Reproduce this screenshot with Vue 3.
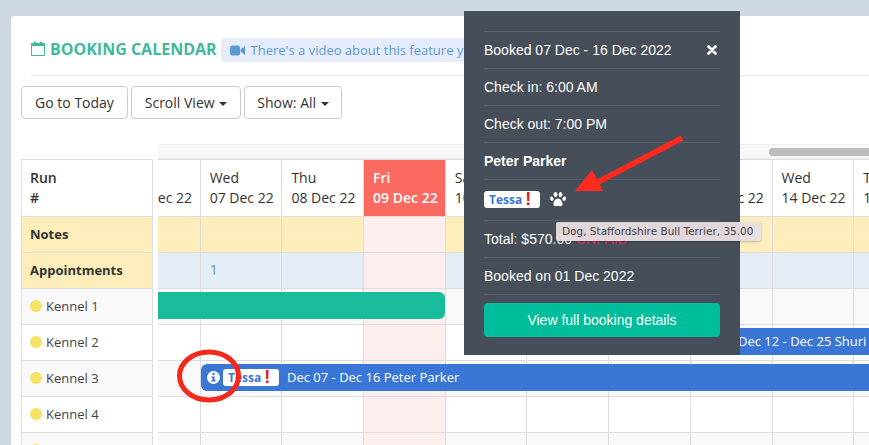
<script setup>
const days = [
  ['Tue', '06 Dec 22'], ['Wed', '07 Dec 22'], ['Thu', '08 Dec 22'], ['Fri', '09 Dec 22'], ['Sat', '10 Dec 22'],
  ['Sun', '11 Dec 22'], ['Mon', '12 Dec 22'], ['Tue', '13 Dec 22'], ['Wed', '14 Dec 22'], ['Thu', '15 Dec 22']
]
const rows = [
  { name: 'Notes', kind: 'notes' },
  { name: 'Appointments', kind: 'appts' },
  { name: 'Kennel 1', kind: 'alt' },
  { name: 'Kennel 2', kind: 'plain' },
  { name: 'Kennel 3', kind: 'alt' },
  { name: 'Kennel 4', kind: 'plain' },
  { name: 'Kennel 5', kind: 'alt' }
]
const isKennel = (r) => r.kind === 'alt' || r.kind === 'plain'
</script>

<template>
  <div class="page">
    <section class="card">
      <header class="head">
        <svg class="cal" viewBox="0 0 14 15" width="14" height="15">
          <path d="M.5 2.5h13v12H.5z" fill="none" stroke="#3fb8a0" />
          <path d="M.5 2.5h13v2.5H.5z" fill="#3fb8a0" />
          <rect x="3" y="0.5" width="2" height="3" rx=".6" fill="#3fb8a0" />
          <rect x="9" y="0.5" width="2" height="3" rx=".6" fill="#3fb8a0" />
        </svg>
        <h1 class="title">BOOKING CALENDAR</h1>
        <div class="pill">
          <svg viewBox="0 0 15 11" width="15" height="11">
            <rect x="0" y="0.5" width="10" height="10" rx="2.2" fill="#5b9bd5" />
            <path d="M10.5 4.6 15 1v9l-4.5-3.6z" fill="#5b9bd5" />
          </svg>
          <span>There's a video about this feature you might like to watch</span>
        </div>
      </header>

      <div class="toolbar">
        <button class="btn w1">Go to Today</button>
        <button class="btn w2">Scroll View <i class="caret"></i></button>
        <button class="btn w3">Show: All <i class="caret"></i></button>
      </div>

      <div class="calendar">
        <div class="fixed">
          <div class="fixed-head">Run<br />#</div>
          <div v-for="r in rows" :key="r.name" class="fixed-cell" :class="r.kind">
            <i v-if="isKennel(r)" class="dot"></i>{{ r.name }}
          </div>
        </div>
        <div class="scroller">
          <div class="strip"><div class="thumb"></div></div>
          <div class="grid">
            <div class="line head-line">
              <div v-for="d in days" :key="d[1]" class="day" :class="{ today: d[1] === '09 Dec 22' }">
                {{ d[0] }}<br />{{ d[1] }}
              </div>
            </div>
            <div v-for="r in rows" :key="r.name" class="line" :class="r.kind">
              <div v-for="d in days" :key="d[1]" class="cell" :class="{ todaycol: d[1] === '09 Dec 22' }">
                <span v-if="r.kind === 'appts' && d[1] === '07 Dec 22'" class="count">1</span>
              </div>
            </div>
            <div class="bar green"></div>
            <div class="bar blue shuri">Dec 12 - Dec 25 Shuri</div>
            <div class="bar blue peter">
              <svg class="info" viewBox="0 0 12 12" width="13" height="13">
                <path fill-rule="evenodd" fill="#fff" d="M6 0a6 6 0 1 1 0 12A6 6 0 0 1 6 0zM5 1.9v1.8h2V1.9zM4.2 5v1.2H5v2.2h-.8v1.3h3.6V8.4H7V5z" />
              </svg>
              <span class="tag">Tessa<b>!</b></span>
              <span class="bar-text">Dec 07 - Dec 16 Peter Parker</span>
            </div>
          </div>
        </div>
      </div>
    </section>

    <aside class="pop">
      <div class="row first">
        <span>Booked 07 Dec - 16 Dec 2022</span>
        <svg class="close" viewBox="0 0 10 10" width="10" height="10">
          <path d="M1.5 1.5l7 7M8.5 1.5l-7 7" stroke="#fff" stroke-width="2.8" stroke-linecap="round" />
        </svg>
      </div>
      <div class="row">Check in: 6:00 AM</div>
      <div class="row">Check out: 7:00 PM</div>
      <div class="row"><strong>Peter Parker</strong></div>
      <div class="row pets">
        <span class="tag big">Tessa<b>!</b></span>
        <svg class="paw" viewBox="0 0 16 15" width="16" height="15">
          <g fill="#fff">
            <ellipse cx="5.5" cy="2.6" rx="1.9" ry="2.5" />
            <ellipse cx="10.5" cy="2.6" rx="1.9" ry="2.5" />
            <ellipse cx="1.8" cy="6.7" rx="1.7" ry="2.2" transform="rotate(-18 1.8 6.7)" />
            <ellipse cx="14.2" cy="6.7" rx="1.7" ry="2.2" transform="rotate(18 14.2 6.7)" />
            <path d="M8 6.4c2.2 0 4.6 3.1 4.6 5.6 0 1.6-1.2 2.2-2.4 2.2-1 0-1.5-.5-2.2-.5s-1.2.5-2.2.5c-1.2 0-2.4-.6-2.4-2.2 0-2.5 2.4-5.6 4.6-5.6z" />
          </g>
        </svg>
      </div>
      <div class="row">Total: $570.00 <span class="unpaid">UNPAID</span></div>
      <div class="row">Booked on 01 Dec 2022</div>
      <div class="row last"><button class="view">View full booking details</button></div>
    </aside>

    <div class="tooltip">Dog, Staffordshire Bull Terrier, 35.00</div>

    <svg class="marks" viewBox="0 0 869 445" width="869" height="445">
      <ellipse cx="209" cy="376" rx="29.5" ry="24" fill="none" stroke="#f5281c" stroke-width="5" />
      <path d="M682 138 598 182" stroke="#fd2a1e" stroke-width="5.5" fill="none" />
      <path d="M575 191 592 170 603 191z" fill="#fd2a1e" />
    </svg>
  </div>
</template>

<style>
html, body { margin: 0; height: 100%; overflow: hidden; background: #cdd8e2; }
</style>

<style scoped>
.page {
  position: relative;
  width: 869px;
  height: 445px;
  overflow: hidden;
  padding: 16px 0 0 11px;
  box-sizing: border-box;
  background: #cdd8e2;
  font-family: "Open Sans", sans-serif;
  font-size: 14px;
  color: #333;
}
.card {
  background: #fff;
  border-radius: 4px 0 0 0;
  height: 429px;
  overflow: hidden;
}
.head {
  margin: 0 0 0 20px;
  padding: 22px 0 13px;
  height: 24px;
  border-bottom: 1px solid #eee;
  display: flex;
  align-items: center;
  white-space: nowrap;
}
.cal { margin-top: -3px; flex: none; }
.title {
  margin: 0 0 0 5px;
  font-size: 16px;
  font-weight: 700;
  line-height: 24px;
  color: #3fb8a0;
  position: relative;
  top: -1px;
}
.pill {
  margin-left: 4px;
  height: 24px;
  padding: 0 10px 0 9px;
  border-radius: 4px;
  background: #e6ecfb;
  color: #5b9bd5;
  display: flex;
  align-items: center;
  gap: 6px;
  line-height: 24px;
  font-size: 13px;
  flex: none;
}
.toolbar {
  display: flex;
  gap: 3px;
  margin: 10px 0 0 10px;
}
.btn {
  height: 33px;
  box-sizing: border-box;
  padding: 0;
  border: 1px solid #ccc;
  border-radius: 4px;
  background: #fff;
  color: #333;
  font: 14px "Open Sans", sans-serif;
  text-align: center;
}
.w1 { width: 107px; }
.w2 { width: 110px; }
.w3 { width: 98px; }
.caret {
  display: inline-block;
  width: 0;
  height: 0;
  margin-left: 1px;
  vertical-align: middle;
  border-top: 4px solid #333;
  border-left: 4px solid transparent;
  border-right: 4px solid transparent;
}
.calendar {
  display: flex;
  margin: 25px 0 0 10px;
  gap: 5px;
}
.fixed {
  width: 130px;
  flex: none;
  margin-top: 15px;
  border-left: 1px solid #ddd;
  border-right: 1px solid #ddd;
  border-top: 1px solid #ddd;
}
.fixed-head {
  height: 57px;
  box-sizing: border-box;
  padding: 8px 8px 0;
  line-height: 20px;
  font-weight: 600;
  border-bottom: 1px solid #ddd;
}
.fixed-cell {
  height: 36px;
  box-sizing: border-box;
  padding: 0 8px 2px;
  display: flex;
  align-items: center;
  border-bottom: 1px solid #ddd;
  color: #444;
  font-size: 13px;
}
.fixed-cell.notes, .fixed-cell.appts {
  background: #fdeebb;
  font-weight: 700;
  color: #333;
}
.fixed-cell.alt { background: #f9f9f9; }
.dot {
  width: 12px;
  height: 12px;
  border-radius: 50%;
  background: #f5e163;
  margin: 0 4px 0 0;
  flex: none;
}
.scroller {
  flex: 1;
  min-width: 0;
  overflow: hidden;
  position: relative;
}
.strip {
  height: 15px;
  box-sizing: border-box;
  background: #f7f7f7;
  border-top: 1px solid #eee;
  border-bottom: 1px solid #eee;
  padding: 3px 0 0 611px;
}
.thumb {
  height: 8px;
  width: 200px;
  border-radius: 4px 0 0 4px;
  background: #bbb;
}
.grid {
  position: relative;
  margin-left: -39px;
  width: 830px;
  border-top: 1px solid #ddd;
}
.line {
  display: flex;
  height: 36px;
  box-sizing: border-box;
  border-bottom: 1px solid #ddd;
}
.line.head-line { height: 57px; background: #fff; }
.line.notes { background: #fdeebb; }
.line.appts { background: #e4ecf6; }
.line.alt { background: #f9f9f9; }
.line.plain { background: #fff; }
.day, .cell {
  width: 81.7px;
  flex: none;
  box-sizing: border-box;
  border-right: 1px solid #ddd;
}
.day {
  padding: 8px 0 0 9px;
  line-height: 20px;
  font-weight: 500;
  white-space: nowrap;
  color: #333;
}
.day.today {
  background: #fb6a60;
  color: #fff;
  font-weight: 600;
}
.cell.todaycol { background: #fdeeee; }
.cell { padding: 7px 0 0 9px; line-height: 20px; }
.count { color: #5b9bd5; }
.bar {
  position: absolute;
  height: 27px;
  border-radius: 6px;
  box-sizing: border-box;
}
.green {
  left: 39px;
  width: 287px;
  top: 132px;
  background: #18bc9c;
  border-radius: 0 6px 6px 0;
}
.blue {
  background: #3a76d5;
  color: #fff;
  line-height: 27px;
  white-space: nowrap;
  font-size: 13px;
}
.shuri {
  left: 581px;
  width: 300px;
  top: 168px;
  padding-left: 38px;
}
.peter {
  left: 82px;
  width: 800px;
  top: 204px;
  border-radius: 6px 0 0 6px;
  display: flex;
  align-items: center;
  padding-left: 6px;
}
.info { flex: none; }
.tag {
  display: inline-flex;
  align-items: center;
  height: 17px;
  box-sizing: border-box;
  padding: 0 5px;
  width: 56px;
  background: #fff;
  border-radius: 3px;
  color: #3a76d5;
  font-size: 12px;
  font-weight: 700;
  font-family: "Open Sans", sans-serif;
  line-height: 17px;
  flex: none;
}
.tag b {
  color: #e3141e;
  font-size: 18px;
  margin-left: 3px;
  font-family: "Liberation Sans", sans-serif;
}
.peter .tag { margin-left: 3px; }
.bar-text { margin-left: 8px; font-size: 13px; }
.pop {
  position: absolute;
  left: 464px;
  top: 11px;
  width: 276px;
  height: 344px;
  box-sizing: border-box;
  padding: 20px 20px 0;
  background: #464e59;
  color: #fff;
  font-family: "Liberation Sans", sans-serif;
  font-size: 14px;
}
.row {
  height: 37px;
  box-sizing: border-box;
  border-top: 1px solid #555e69;
  display: flex;
  align-items: center;
  white-space: pre;
}
.row.first { justify-content: space-between; padding-right: 3px; }
.row.pets { height: 41px; }
.row.pets .paw { margin-left: 10px; margin-top: -2px; }
.pets .tag.big { margin-top: -2px; }
.unpaid { color: #e6246f; }
.row.last { height: auto; padding-top: 8px; display: block; }
.view {
  display: block;
  width: 100%;
  height: 34px;
  border: 0;
  border-radius: 4px;
  background: #00bd9b;
  color: #fff;
  font: 14px "Liberation Sans", sans-serif;
}
.tooltip {
  position: absolute;
  left: 556px;
  top: 222px;
  width: 205px;
  height: 19px;
  box-sizing: border-box;
  padding-left: 6px;
  border-radius: 2px;
  background: rgba(232, 222, 224, 0.95);
  box-shadow: 0 1px 2px rgba(0, 0, 0, 0.25);
  color: #444;
  font-family: "DejaVu Sans", sans-serif;
  font-size: 10.5px;
  line-height: 19px;
  white-space: nowrap;
}
.marks {
  position: absolute;
  left: 0;
  top: 0;
  pointer-events: none;
}
</style>
